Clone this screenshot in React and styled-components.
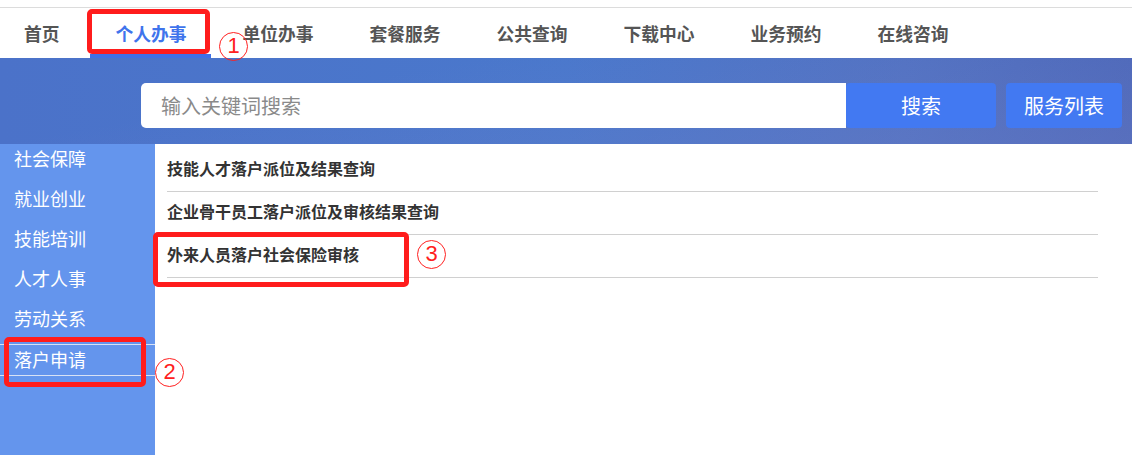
import React from "react";
import styled, { createGlobalStyle } from "styled-components";

const Global = createGlobalStyle`
  html, body { margin: 0; padding: 0; background: #fff; overflow: hidden; }
  body { font-family: "Microsoft YaHei", "Noto Sans CJK SC", "Noto Sans", sans-serif; }
  * { box-sizing: border-box; }
`;

const Page = styled.div`
  position: relative;
  width: 1132px;
  height: 455px;
  display: flex;
  flex-direction: column;
  overflow: hidden;
`;

const TopStrip = styled.div`
  height: 8px;
  border-bottom: 1px solid #dcdcdc;
  flex: none;
`;

const Nav = styled.nav`
  height: 50px;
  flex: none;
  display: flex;
  align-items: center;
  padding-left: 24px;
  gap: 56px;
`;

const NavItem = styled.div`
  position: relative;
  height: 50px;
  display: flex;
  align-items: center;
  font-size: 17.75px;
  font-weight: 700;
  line-height: 20px;
  color: ${(p) => (p.$active ? "#3f74ec" : "#555")};
  &::after {
    content: "";
    display: ${(p) => (p.$active ? "block" : "none")};
    position: absolute;
    left: -26px;
    right: -24px;
    bottom: 0;
    height: 4px;
    background: #3f6fe6;
  }
`;

const Banner = styled.div`
  height: 86px;
  flex: none;
  display: flex;
  align-items: flex-start;
  gap: 10px;
  padding: 25px 10px 0 141px;
  background:
    linear-gradient(170deg, rgba(70, 110, 200, 0.0) 30%, rgba(120, 130, 200, 0.35) 100%),
    linear-gradient(90deg, #4b72c9 0%, #4a78cc 50%, #4f71c2 80%, #4765b8 100%);
`;

const SearchBox = styled.div`
  flex: 1;
  height: 45px;
  background: #fff;
  border-radius: 5px 0 0 5px;
  display: flex;
  align-items: center;
  padding-left: 20px;
  font-size: 20px;
  line-height: 24px;
  color: #8a8a8a;
`;

const Button = styled.div`
  width: ${(p) => p.$w}px;
  height: 45px;
  flex: none;
  background: #4279f2;
  border-radius: 4px;
  color: #fff;
  font-size: 20px;
  line-height: 24px;
  display: flex;
  align-items: center;
  justify-content: center;
  margin-left: ${(p) => p.$ml || 0}px;
`;

const Main = styled.div`
  flex: 1;
  display: flex;
`;

const Sidebar = styled.div`
  width: 155px;
  flex: none;
  background: #6495ed;
  display: flex;
  flex-direction: column;
`;

const SideItem = styled.div`
  height: ${(p) => (p.$active ? 32 : 40)}px;
  padding: 4px 0 0 14px;
  font-size: 18px;
  line-height: 20px;
  color: #fff;
  border-top: ${(p) => (p.$active ? "1px solid #d8e2f5" : "none")};
  border-bottom: ${(p) => (p.$active ? "1px solid #d8e2f5" : "none")};
`;

const Content = styled.div`
  flex: 1;
  padding: 5px 34px 0 12px;
  display: flex;
  flex-direction: column;
`;

const Row = styled.div`
  height: 43px;
  border-bottom: 1px solid #d0d0d0;
  display: flex;
  align-items: center;
  padding-bottom: 4px;
  font-size: 16px;
  font-weight: 700;
  line-height: 20px;
  color: #333;
`;

const Mark = styled.div`
  position: absolute;
  left: ${(p) => p.$x}px;
  top: ${(p) => p.$y}px;
  width: ${(p) => p.$w}px;
  height: ${(p) => p.$h}px;
  border: 5px solid #ff1c1c;
  border-radius: 5px;
  pointer-events: none;
`;

const Badge = styled.div`
  position: absolute;
  left: ${(p) => p.$x}px;
  top: ${(p) => p.$y}px;
  width: 29px;
  height: 29px;
  border: 1.5px solid #ff2020;
  border-radius: 50%;
  color: #ff2020;
  font-family: "Liberation Sans", Arial, sans-serif;
  font-size: 22px;
  line-height: 26px;
  text-align: center;
`;

const navItems = ["首页", "个人办事", "单位办事", "套餐服务", "公共查询", "下载中心", "业务预约", "在线咨询"];
const sideItems = ["社会保障", "就业创业", "技能培训", "人才人事", "劳动关系", "落户申请"];
const rows = ["技能人才落户派位及结果查询", "企业骨干员工落户派位及审核结果查询", "外来人员落户社会保险审核"];

export default function App() {
  return (
    <Page>
      <Global />
      <TopStrip />
      <Nav>
        {navItems.map((n) => (
          <NavItem key={n} $active={n === "个人办事"}>{n}</NavItem>
        ))}
      </Nav>
      <Banner>
        <SearchBox>输入关键词搜索</SearchBox>
        <Button $w={150} $ml={-10}>搜索</Button>
        <Button $w={116}>服务列表</Button>
      </Banner>
      <Main>
        <Sidebar>
          {sideItems.map((s) => (
            <SideItem key={s} $active={s === "落户申请"}>{s}</SideItem>
          ))}
        </Sidebar>
        <Content>
          {rows.map((r) => (
            <Row key={r}>{r}</Row>
          ))}
        </Content>
      </Main>
      <Mark $x={87} $y={9} $w={123} $h={45} />
      <Badge $x={219} $y={32}>1</Badge>
      <Mark $x={4} $y={337} $w={142} $h={50} />
      <Badge $x={155} $y={358}>2</Badge>
      <Mark $x={153} $y={232} $w={256} $h={55} />
      <Badge $x={417} $y={240}>3</Badge>
    </Page>
  );
}
